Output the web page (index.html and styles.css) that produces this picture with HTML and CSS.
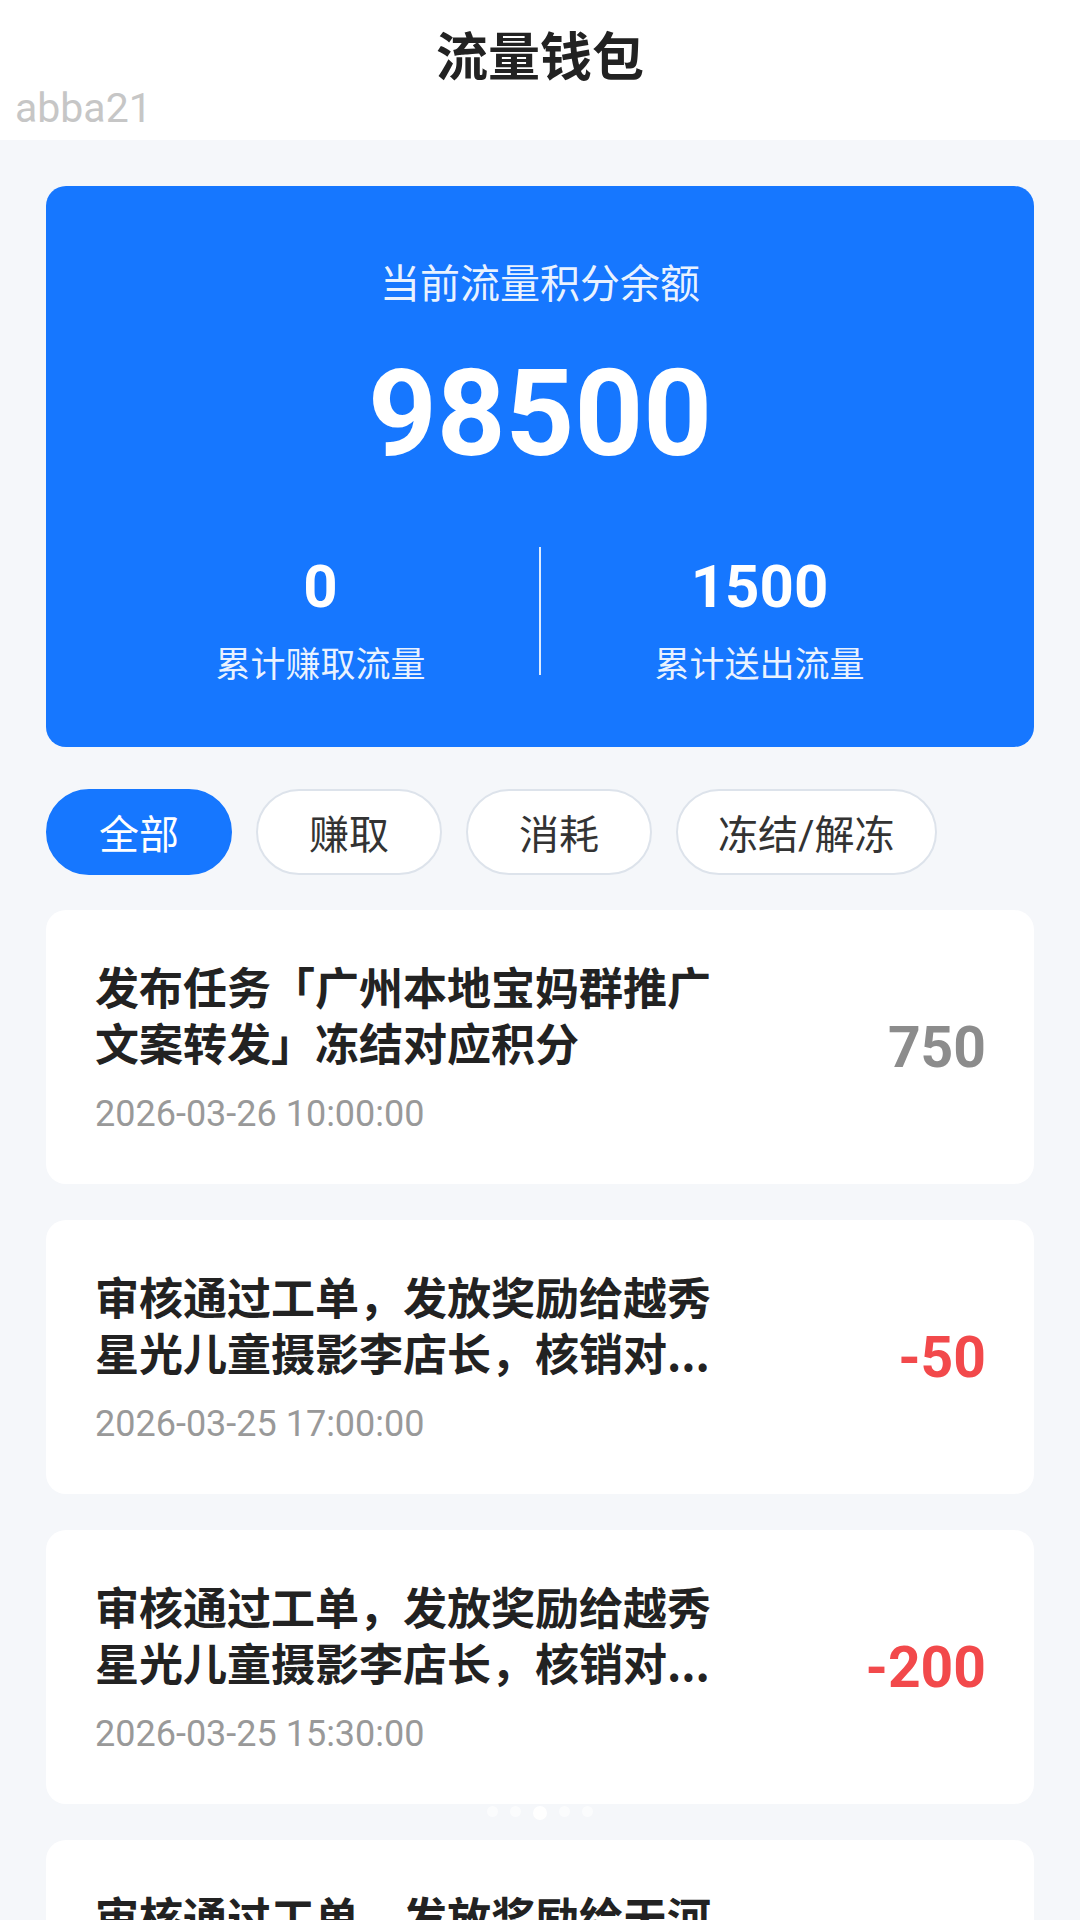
FILE: index.html
```html
<!DOCTYPE html>
<html lang="zh-CN">
<head>
    <meta charset="UTF-8">
    <meta name="viewport" content="width=device-width, initial-scale=1.0">
    <title>流量钱包</title>
    <link rel="stylesheet" href="styles.css">
</head>
<body>
    <header class="top-bar">
        <h1>流量钱包</h1>
        <span class="watermark">abba21</span>
    </header>
    <main class="wallet">
        <section class="balance-card">
            <div class="balance-label">当前流量积分余额</div>
            <div class="balance-value">98500</div>
            <div class="balance-stats">
                <div class="stat">
                    <div class="stat-value">0</div>
                    <div class="stat-label">累计赚取流量</div>
                </div>
                <div class="stat-divider"></div>
                <div class="stat">
                    <div class="stat-value">1500</div>
                    <div class="stat-label">累计送出流量</div>
                </div>
            </div>
        </section>

        <nav class="tabs">
            <button class="tab tab-active" type="button">全部</button>
            <button class="tab" type="button">赚取</button>
            <button class="tab" type="button">消耗</button>
            <button class="tab" type="button">冻结/解冻</button>
        </nav>

        <section class="records">
            <div class="record">
                <div class="record-info">
                    <div class="record-title">发布任务「广州本地宝妈群推广文案转发」冻结对应积分</div>
                    <div class="record-date">2026-03-26 10:00:00</div>
                </div>
                <div class="record-amount amount-frozen">750</div>
            </div>
            <div class="record">
                <div class="record-info">
                    <div class="record-title">审核通过工单，发放奖励给越秀星光儿童摄影李店长，核销对...</div>
                    <div class="record-date">2026-03-25 17:00:00</div>
                </div>
                <div class="record-amount amount-minus">-50</div>
            </div>
            <div class="record">
                <div class="record-info">
                    <div class="record-title">审核通过工单，发放奖励给越秀星光儿童摄影李店长，核销对...</div>
                    <div class="record-date">2026-03-25 15:30:00</div>
                </div>
                <div class="record-amount amount-minus">-200</div>
            </div>
            <div class="record">
                <div class="record-info">
                    <div class="record-title">审核通过工单，发放奖励给天河城亲子乐园王店长，核销对...</div>
                    <div class="record-date">2026-03-25 11:20:00</div>
                </div>
                <div class="record-amount amount-minus">-100</div>
            </div>
        </section>
    </main>
    <div class="pager-dots">
        <span></span><span></span><span class="dot-current"></span><span></span><span></span>
    </div>
</body>
</html>
```

FILE: styles.css
```css
body {
    margin: 0;
    background: #f5f7fa;
    font-family: "Roboto", "Noto Sans CJK SC", sans-serif;
    color: #222;
}
.top-bar {
    position: relative;
    height: 140px;
    box-sizing: border-box;
    padding-top: 24px;
    background: #fff;
}
.top-bar h1 {
    margin: 0;
    text-align: center;
    font-size: 52px;
    line-height: 70px;
    font-weight: 700;
    color: #222;
}
.watermark {
    position: absolute;
    left: 15px;
    top: 84px;
    font-size: 41px;
    line-height: 48px;
    color: #c6c6c6;
}
.wallet {
    padding: 46px 46px 0;
}
.balance-card {
    background: #1677ff;
    border-radius: 20px;
    padding: 71px 56px 57px;
    color: #fff;
    text-align: center;
}
.balance-label {
    font-size: 40px;
    line-height: 56px;
    color: rgba(255, 255, 255, 0.92);
}
.balance-value {
    margin-top: 31px;
    font-size: 120px;
    line-height: 140px;
    font-weight: 700;
}
.balance-stats {
    margin-top: 63px;
    display: flex;
    align-items: flex-start;
}
.stat {
    flex: 1;
}
.stat-value {
    font-size: 60px;
    line-height: 80px;
    font-weight: 700;
}
.stat-label {
    margin-top: 15px;
    font-size: 35px;
    line-height: 48px;
    color: rgba(255, 255, 255, 0.92);
}
.stat-divider {
    width: 2px;
    height: 128px;
    background: rgba(255, 255, 255, 0.85);
}
.tabs {
    margin-top: 42px;
    display: flex;
    gap: 24px;
}
.tab {
    min-width: 186px;
    height: 86px;
    box-sizing: border-box;
    padding: 0 40px;
    border: 2px solid #dde3eb;
    border-radius: 43px;
    background: #fff;
    font-family: inherit;
    font-size: 40px;
    color: #333;
}
.tab-active {
    border-color: #1677ff;
    background: #1677ff;
    color: #fff;
}
.records {
    margin-top: 35px;
    display: flex;
    flex-direction: column;
    gap: 36px;
}
.record {
    display: flex;
    align-items: center;
    background: #fff;
    border-radius: 20px;
    padding: 48px 48px 48px 49px;
}
.record-info {
    flex: 0 1 620px;
    min-width: 0;
}
.record-title {
    font-family: "Noto Sans CJK SC", sans-serif;
    font-size: 44px;
    line-height: 56px;
    font-weight: 700;
    color: #222;
}
.record-date {
    margin-top: 22px;
    font-size: 36px;
    line-height: 44px;
    color: #999;
}
.record-amount {
    margin-left: auto;
    font-size: 57px;
    font-weight: 700;
}
.amount-frozen {
    color: #8c8c8c;
}
.amount-minus {
    color: #f2494b;
}
.pager-dots {
    position: fixed;
    left: 0;
    right: 0;
    top: 1806px;
    display: flex;
    justify-content: center;
    gap: 12px;
}
.pager-dots span {
    width: 11px;
    height: 11px;
    border-radius: 50%;
    background: rgba(255, 255, 255, 0.6);
}
.pager-dots .dot-current {
    width: 14px;
    height: 14px;
    background: #fff;
}
```
